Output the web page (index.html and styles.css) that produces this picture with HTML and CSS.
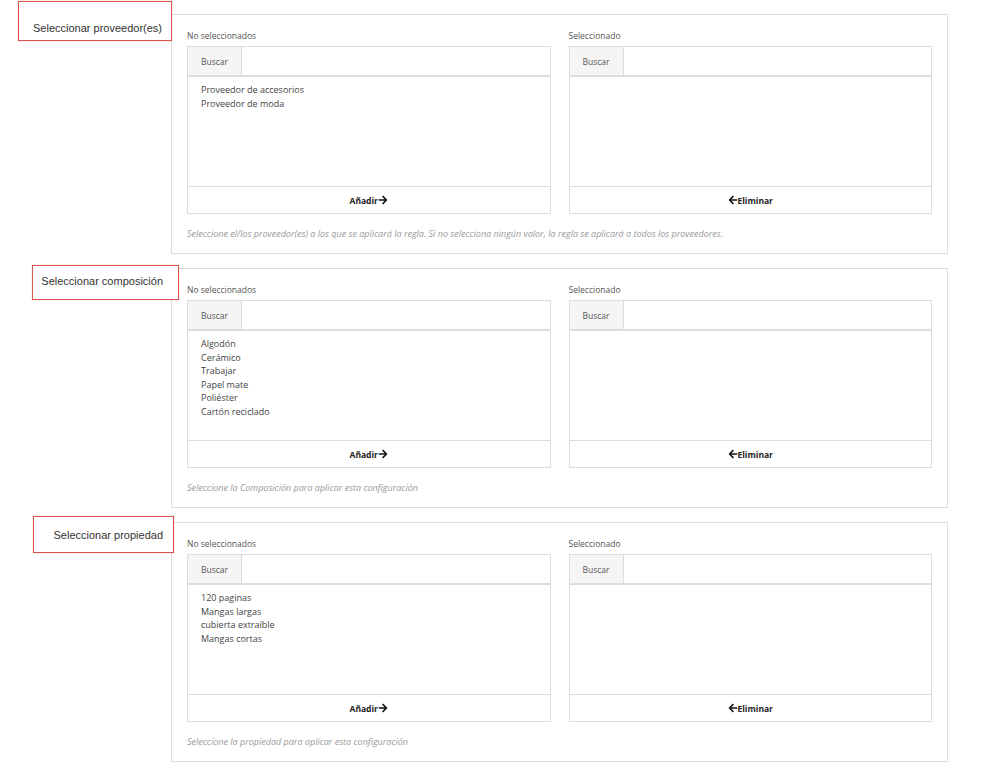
FILE: index.html
```html
<!DOCTYPE html>
<html lang="es">
<head>
    <meta charset="UTF-8">
    <meta name="viewport" content="width=device-width, initial-scale=1.0">
    <title>Configuración de regla</title>
    <link rel="stylesheet" href="styles.css">
</head>
<body>

    <div class="section section-vendor">
        <div class="section-label">Seleccionar proveedor(es)</div>
        <div class="panel">
            <div class="dual-list">
                <div class="list-col">
                    <div class="list-title">No seleccionados</div>
                    <div class="list-box">
                        <div class="search-row">
                            <span class="search-addon">Buscar</span>
                            <input class="search-input" type="text">
                        </div>
                        <ul class="options">
                            <li>Proveedor de accesorios</li>
                            <li>Proveedor de moda</li>
                        </ul>
                        <button class="move-btn">Añadir<svg class="arrow" viewBox="0 0 448 512"><path d="M190.5 66.9l22.2-22.2c9.4-9.4 24.6-9.4 33.9 0L441 239c9.4 9.4 9.4 24.6 0 33.9L246.6 467.3c-9.4 9.4-24.6 9.4-33.9 0l-22.2-22.2c-9.5-9.5-9.3-25 .4-34.3L311.4 296H24c-13.3 0-24-10.7-24-24v-32c0-13.3 10.7-24 24-24h287.4L190.9 101.2c-9.8-9.3-10-24.8-.4-34.3z"/></svg></button>
                    </div>
                </div>
                <div class="list-col">
                    <div class="list-title">Seleccionado</div>
                    <div class="list-box">
                        <div class="search-row">
                            <span class="search-addon">Buscar</span>
                            <input class="search-input" type="text">
                        </div>
                        <ul class="options"></ul>
                        <button class="move-btn"><svg class="arrow" viewBox="0 0 448 512"><path d="M257.5 445.1l-22.2 22.2c-9.4 9.4-24.6 9.4-33.9 0L7 273c-9.4-9.4-9.4-24.6 0-33.9L201.4 44.7c9.4-9.4 24.6-9.4 33.9 0l22.2 22.2c9.5 9.5 9.3 25-.4 34.3L136.6 216H424c13.3 0 24 10.7 24 24v32c0 13.3-10.7 24-24 24H136.6l120.5 114.8c9.8 9.3 10 24.8.4 34.3z"/></svg>Eliminar</button>
                    </div>
                </div>
            </div>
            <p class="help-text">Seleccione el/los proveedor(es) a los que se aplicará la regla. Si no selecciona ningún valor, la regla se aplicará a todos los proveedores.</p>
        </div>
    </div>

    <div class="section section-composition">
        <div class="section-label">Seleccionar composición</div>
        <div class="panel">
            <div class="dual-list">
                <div class="list-col">
                    <div class="list-title">No seleccionados</div>
                    <div class="list-box">
                        <div class="search-row">
                            <span class="search-addon">Buscar</span>
                            <input class="search-input" type="text">
                        </div>
                        <ul class="options">
                            <li>Algodón</li>
                            <li>Cerámico</li>
                            <li>Trabajar</li>
                            <li>Papel mate</li>
                            <li>Poliéster</li>
                            <li>Cartón reciclado</li>
                        </ul>
                        <button class="move-btn">Añadir <svg class="arrow" viewBox="0 0 448 512"><path d="M190.5 66.9l22.2-22.2c9.4-9.4 24.6-9.4 33.9 0L441 239c9.4 9.4 9.4 24.6 0 33.9L246.6 467.3c-9.4 9.4-24.6 9.4-33.9 0l-22.2-22.2c-9.5-9.5-9.3-25 .4-34.3L311.4 296H24c-13.3 0-24-10.7-24-24v-32c0-13.3 10.7-24 24-24h287.4L190.9 101.2c-9.8-9.3-10-24.8-.4-34.3z"/></svg></button>
                    </div>
                </div>
                <div class="list-col">
                    <div class="list-title">Seleccionado</div>
                    <div class="list-box">
                        <div class="search-row">
                            <span class="search-addon">Buscar</span>
                            <input class="search-input" type="text">
                        </div>
                        <ul class="options"></ul>
                        <button class="move-btn"><svg class="arrow" viewBox="0 0 448 512"><path d="M257.5 445.1l-22.2 22.2c-9.4 9.4-24.6 9.4-33.9 0L7 273c-9.4-9.4-9.4-24.6 0-33.9L201.4 44.7c9.4-9.4 24.6-9.4 33.9 0l22.2 22.2c9.5 9.5 9.3 25-.4 34.3L136.6 216H424c13.3 0 24 10.7 24 24v32c0 13.3-10.7 24-24 24H136.6l120.5 114.8c9.8 9.3 10 24.8.4 34.3z"/></svg>Eliminar</button>
                    </div>
                </div>
            </div>
            <p class="help-text">Seleccione la Composición para aplicar esta configuración</p>
        </div>
    </div>

    <div class="section section-property">
        <div class="section-label">Seleccionar propiedad</div>
        <div class="panel">
            <div class="dual-list">
                <div class="list-col">
                    <div class="list-title">No seleccionados</div>
                    <div class="list-box">
                        <div class="search-row">
                            <span class="search-addon">Buscar</span>
                            <input class="search-input" type="text">
                        </div>
                        <ul class="options">
                            <li>120 paginas</li>
                            <li>Mangas largas</li>
                            <li>cubierta extraíble</li>
                            <li>Mangas cortas</li>
                        </ul>
                        <button class="move-btn">Añadir<svg class="arrow" viewBox="0 0 448 512"><path d="M190.5 66.9l22.2-22.2c9.4-9.4 24.6-9.4 33.9 0L441 239c9.4 9.4 9.4 24.6 0 33.9L246.6 467.3c-9.4 9.4-24.6 9.4-33.9 0l-22.2-22.2c-9.5-9.5-9.3-25 .4-34.3L311.4 296H24c-13.3 0-24-10.7-24-24v-32c0-13.3 10.7-24 24-24h287.4L190.9 101.2c-9.8-9.3-10-24.8-.4-34.3z"/></svg></button>
                    </div>
                </div>
                <div class="list-col">
                    <div class="list-title">Seleccionado</div>
                    <div class="list-box">
                        <div class="search-row">
                            <span class="search-addon">Buscar</span>
                            <input class="search-input" type="text">
                        </div>
                        <ul class="options"></ul>
                        <button class="move-btn"><svg class="arrow" viewBox="0 0 448 512"><path d="M257.5 445.1l-22.2 22.2c-9.4 9.4-24.6 9.4-33.9 0L7 273c-9.4-9.4-9.4-24.6 0-33.9L201.4 44.7c9.4-9.4 24.6-9.4 33.9 0l22.2 22.2c9.5 9.5 9.3 25-.4 34.3L136.6 216H424c13.3 0 24 10.7 24 24v32c0 13.3-10.7 24-24 24H136.6l120.5 114.8c9.8 9.3 10 24.8.4 34.3z"/></svg>Eliminar</button>
                    </div>
                </div>
            </div>
            <p class="help-text">Seleccione la propiedad para aplicar esta configuración</p>
        </div>
    </div>

</body>
</html>
```

FILE: styles.css
```css
body {
    margin: 0;
    background-color: #fff;
    font-family: "Open Sans", "Liberation Sans", sans-serif;
    color: #555;
}

.section {
    display: flex;
    align-items: flex-start;
}
.section-vendor {
    padding-top: 1px;
}
.section-composition {
    margin-top: 11px;
}
.section-property {
    margin-top: 8px;
}

/* label boxes that sit over the panel's left edge */
.section-label {
    position: relative;
    z-index: 1;
    box-sizing: border-box;
    border: 1px solid #d9534f;
    box-shadow: 0 0 1px rgba(217, 83, 79, 0.5);
    background-color: #fff;
    font-family: "Liberation Sans", Arial, sans-serif;
    font-size: 11px;
    color: #333;
    text-align: right;
}
.section-vendor .section-label {
    margin-left: 18px;
    width: 154px;
    height: 40px;
    padding-top: 20px;
    padding-right: 9px;
    margin-right: -1px;
}
.section-composition .section-label {
    margin-left: 32px;
    width: 147px;
    height: 35px;
    padding-top: 9px;
    padding-right: 15px;
    margin-right: -8px;
}
.section-property .section-label {
    margin-left: 33px;
    width: 141px;
    height: 37px;
    padding-top: 12px;
    padding-right: 10px;
    margin-right: -3px;
}

.panel {
    box-sizing: border-box;
    width: 777px;
    height: 240px;
    border: 1px solid #ddd;
    padding: 15px 15px 0 15px;
}
.section-vendor .panel {
    margin-top: 13px;
}
.section-composition .panel {
    margin-top: 3px;
}
.section-property .panel {
    margin-top: 6px;
}

.dual-list {
    display: flex;
    gap: 18px;
}
.list-col {
    flex: 1;
}
.list-title {
    font-size: 8.5px;
    color: #555;
    height: 16px;
    line-height: 12px;
}
.list-box {
    border: 1px solid #ddd;
    display: flex;
    flex-direction: column;
}
.search-row {
    display: flex;
    height: 28px;
    border-bottom: 2px solid #ddd;
}
.search-addon {
    width: 53px;
    background-color: #f5f5f5;
    border-right: 1px solid #ddd;
    font-size: 8.5px;
    color: #555;
    display: flex;
    align-items: center;
    justify-content: center;
}
.search-input {
    flex: 1;
    border: none;
    outline: none;
}
.options {
    list-style: none;
    margin: 0;
    height: 110px;
    box-sizing: border-box;
    padding: 6px 13px;
    font-size: 9px;
    line-height: 13.6px;
    color: #444;
    border-bottom: 1px solid #ddd;
}
.move-btn {
    height: 26px;
    border: none;
    background-color: #fff;
    font-family: "Open Sans", "Liberation Sans", sans-serif;
    font-weight: bold;
    font-size: 8.5px;
    color: #222;
    display: flex;
    align-items: center;
    justify-content: center;
    cursor: pointer;
}
.arrow {
    width: 10px;
    height: 10px;
    fill: #111;
}

.help-text {
    margin: 13px 0 0 0;
    font-size: 9px;
    font-style: italic;
    color: #999;
}
```
